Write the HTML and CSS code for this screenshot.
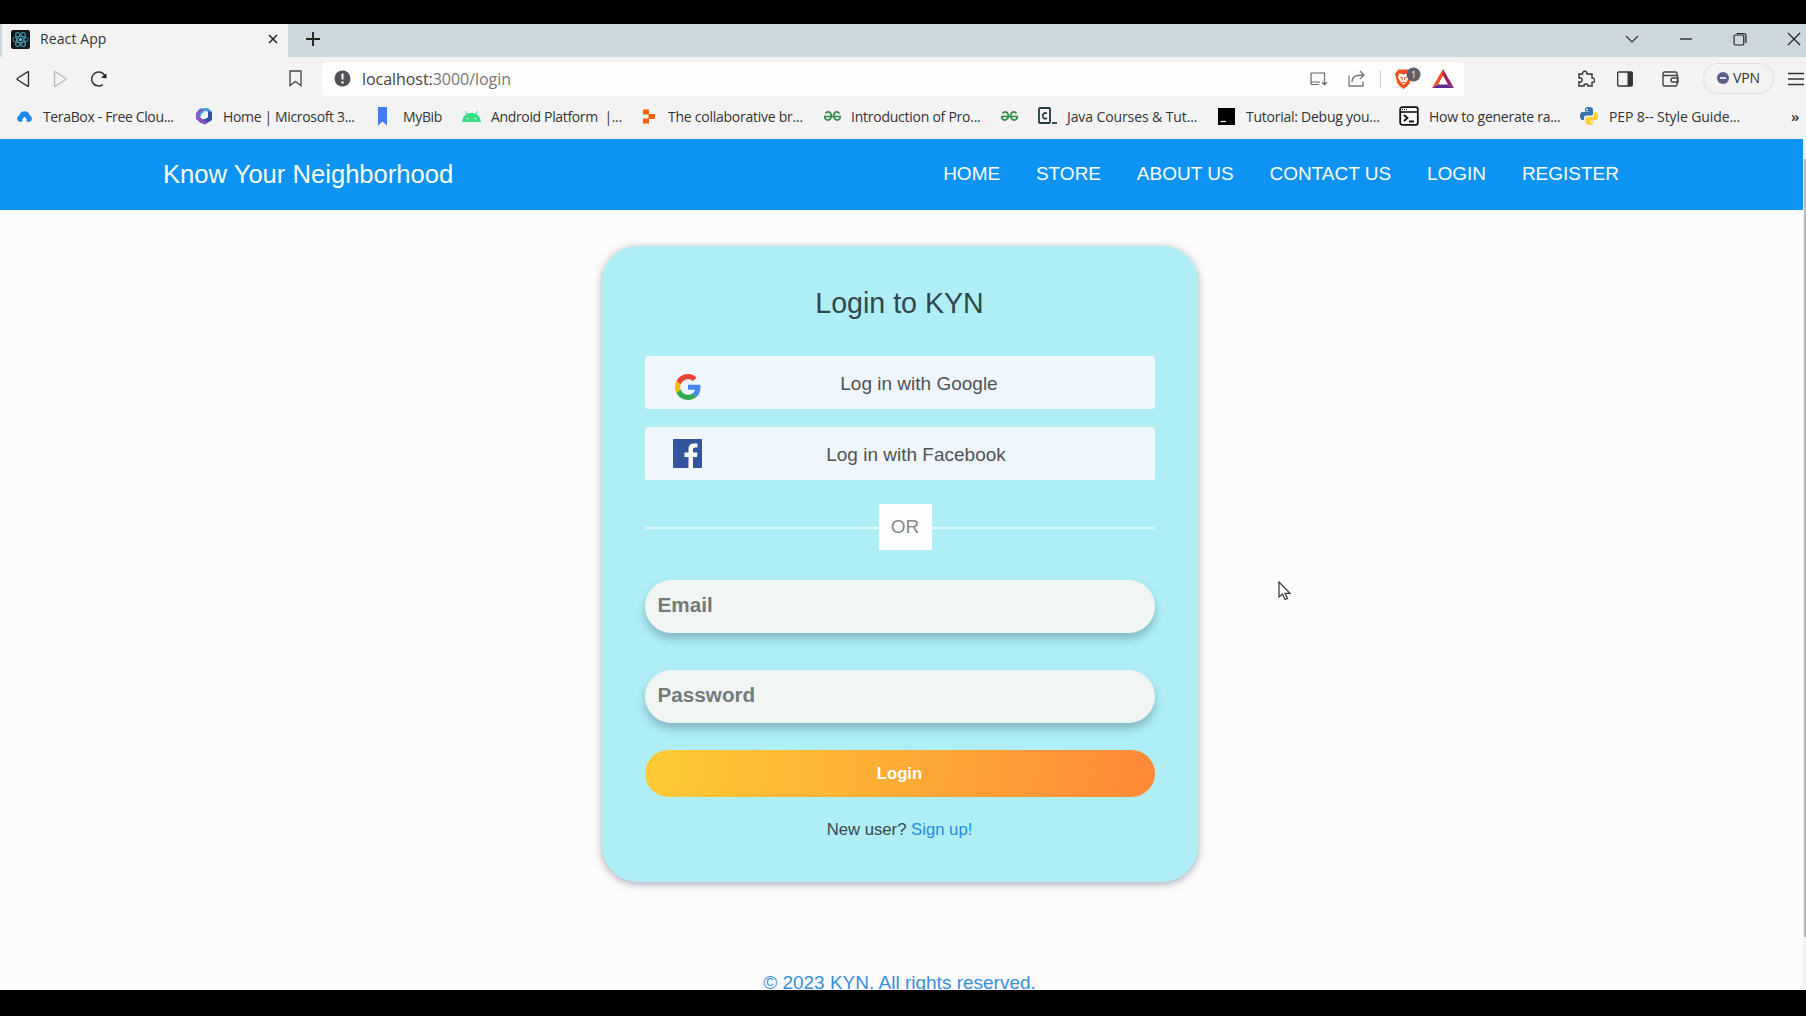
FILE: index.html
```html
<!DOCTYPE html>
<html lang="en">
<head>
<meta charset="utf-8">
<title>React App</title>
<link rel="stylesheet" href="styles.css">
</head>
<body>
<div class="tabstrip">
  <div class="tab">
    <svg class="favicon" width="19" height="19" viewBox="0 0 19 19"><rect width="19" height="19" rx="2" fill="#15191c"/><g fill="none" stroke="#4d9db5" stroke-width="1"><ellipse cx="9.5" cy="9.5" rx="7.8" ry="3"/><ellipse cx="9.5" cy="9.5" rx="7.8" ry="3" transform="rotate(60 9.5 9.5)"/><ellipse cx="9.5" cy="9.5" rx="7.8" ry="3" transform="rotate(120 9.5 9.5)"/></g><circle cx="9.5" cy="9.5" r="1.5" fill="#61dafb"/></svg>
    <span class="tab-title">React App</span>
    <svg class="tab-close" width="10" height="10" viewBox="0 0 10 10"><path d="M1 1l8 8M9 1l-8 8" stroke="#222" stroke-width="1.5"/></svg>
  </div>
  <svg class="new-tab" width="14" height="14" viewBox="0 0 14 14"><path d="M7 0v14M0 7h14" stroke="#222" stroke-width="1.9"/></svg>
  <div class="window-controls">
    <svg width="14" height="14" viewBox="0 0 14 14"><path d="M1 4l6 6 6-6" fill="none" stroke="#333" stroke-width="1.2"/></svg>
    <svg width="14" height="14" viewBox="0 0 14 14"><path d="M1 7h12" stroke="#222" stroke-width="1.3"/></svg>
    <svg width="14" height="14" viewBox="0 0 14 14"><g fill="none" stroke="#222" stroke-width="1.2"><rect x="1" y="3" width="9.8" height="10" rx="1.5"/><path d="M3.5 1.5h7a2.5 2.5 0 0 1 2.5 2.5v7"/></g></svg>
    <svg width="14" height="14" viewBox="0 0 14 14"><path d="M1 1l12 12M13 1L1 13" stroke="#222" stroke-width="1.2"/></svg>
  </div>
</div>

<div class="toolbar">
  <div class="history">
    <svg width="14" height="18" viewBox="0 0 14 18"><path d="M12.5 2.2v13.6q0 1-1 .4L1.6 9.8q-1-.8 0-1.6l9.900-6.400q1-.6 1 .4z" fill="none" stroke="#333" stroke-width="1.4"/></svg>
    <svg width="14" height="18" viewBox="0 0 14 18"><path d="M1.500 2.200v13.600q0 1 1 .4l9.900-6.400q1-.8 0-1.600L2.500 1.800q-1-.6-1 .4z" fill="none" stroke="#bbb" stroke-width="1.400"/></svg>
    <svg width="18" height="18" viewBox="0 0 18 18"><path d="M12.800 14.600A7 7 0 1 1 15 6" fill="none" stroke="#333" stroke-width="1.500"/><path d="M16.500 3.500v5l-5.500-1z" fill="#222"/></svg>
  </div>
  <svg class="save" width="13" height="17" viewBox="0 0 13 17"><path d="M1 1h11v14.500l-5.500-4-5.500 4z" fill="none" stroke="#444" stroke-width="1.300"/></svg>
  <div class="address">
    <svg width="17" height="17" viewBox="0 0 17 17"><circle cx="8.500" cy="8.500" r="8" fill="#505256"/><path d="M8.500 3.500v6" stroke="#fff" stroke-width="2"/><circle cx="8.500" cy="12.500" r="1.200" fill="#fff"/></svg>
    <span class="url"><b>localhost:</b>3000/login</span>
    <div class="address-actions">
      <svg width="18" height="14" viewBox="0 0 18 14"><path d="M8.500 12.500H2a1 1 0 0 1-1-1V2a1 1 0 0 1 1-1h12.500v4.500M1 10h9M14.500 6v6.500M12 10.300l2.500 2.400 2.500-2.400" fill="none" stroke="#666" stroke-width="1.200"/></svg>
      <svg width="18" height="17" viewBox="0 0 18 17"><path d="M1 5.500V16h14v-4.500M4 12c0-5 3-7 11.500-7M12 1l4 4-4 4" fill="none" stroke="#777" stroke-width="1.300"/></svg>
      <i class="separator"></i>
      <svg width="28" height="24" viewBox="0 0 28 24"><path d="M4.500 2.500h10l2.500 3-1 9.500q-.5 3-6.500 7-6-4-6.500-7L1 6.500z" fill="#f4511e"/><path d="M5 6.500l4.500 1 4.500-1 1 4-2 3.500-3.500 4-3.500-4-2-3.500z" fill="#fff"/><path d="M6 10l2.500 1-.5 2.500M13 10l-2.500 1 .5 2.500M8 15.500h3" fill="none" stroke="#f4511e"/><circle cx="19.500" cy="7.500" r="7" fill="#5d6068"/><text x="19.500" y="11" text-anchor="middle" class="badge">1</text></svg>
      <svg class="rewards" width="22" height="19" viewBox="0 0 22 19"><path d="M11 0L0 19l6-3.500 5-9z" fill="#ff4c1b"/><path d="M11 0l11 19-6-3.500-5-9z" fill="#9e1f63"/><path d="M0 19h22l-6-3.500H6z" fill="#5c2c8f"/></svg>
    </div>
  </div>
  <div class="extensions">
    <svg width="18" height="18" viewBox="0 0 18 18"><path d="M2 4h3.500a2.300 2.300 0 1 1 4.500 0h5v4a2.200 2.200 0 1 1 0 4.300V16h-4a2 2 0 1 0-4 0H2v-4a2.200 2.200 0 1 0 0-4z" fill="none" stroke="#333" stroke-width="1.400"/></svg>
    <svg width="16" height="16" viewBox="0 0 16 16"><rect x=".7" y="1" width="14.600" height="14" rx="1" fill="none" stroke="#333" stroke-width="1.300"/><path d="M10.500 1H15v14h-4.500z" fill="#333"/></svg>
    <svg class="wallet" width="17" height="16" viewBox="0 0 17 16"><path d="M15 4.500V2.500q0-1.500-1.500-1.500H2.500Q1 1 1 2.500v11Q1 15 2.500 15h11q1.500 0 1.500-1.500V12M1 4.500h14.500v8M16 7h-5q-2 0-2 2t2 2h5z" fill="none" stroke="#444" stroke-width="1.400"/></svg>
    <span class="vpn"><svg width="12" height="12" viewBox="0 0 12 12"><circle cx="6" cy="6" r="6" fill="#5b5f8d"/><path d="M3 6h6" stroke="#fff" stroke-width="1.600"/></svg>VPN</span>
    <svg width="16" height="14" viewBox="0 0 16 14"><path d="M0 1.500h16M0 7h16M0 12.500h16" stroke="#333" stroke-width="1.300"/></svg>
  </div>
</div>

<div class="bookmarks">
  <span class="bookmark"><svg width="17" height="17" viewBox="0 0 17 17"><path d="M5.500 14H4.300a3.500 3.500 0 0 1-1-6.700 5.400 5.400 0 0 1 10.400 0A3.500 3.500 0 0 1 13 14h-1.500L8.500 9.500z" fill="#1b87f2"/><path d="M6 12l2.500-3.500L11 12H9.500v3h-2v-3z" fill="#fff"/></svg>TeraBox - Free Clou...</span>
  <span class="bookmark"><svg width="18" height="18" viewBox="0 0 18 18"><path d="M5 1.500L13 1l4 4-8-1-4 6z" fill="#3aa0e0"/><path d="M5 1.500L1 6v6l5 4 2-3-3-3V6l4-3z" fill="#7e60c9"/><path d="M17 5v8l-7 4.500-6-3 4-2 5-2V4z" fill="#374ea8"/><path d="M2 12l7 5.500 4-2-7-4z" fill="#8b49c6"/><circle cx="9" cy="9" r="3" fill="#fff"/></svg>Home | Microsoft 3...</span>
  <span class="bookmark mybib"><svg width="14" height="19" viewBox="0 0 14 19"><path d="M2 0h9v18.500l-4.500-4L2 18.500z" fill="#3e7df5"/></svg>MyBib</span>
  <span class="bookmark"><svg width="19" height="13" viewBox="0 0 19 13"><path d="M0 12a9.500 9.200 0 0 1 19 0z" fill="#3ddc84"/><path d="M3.500 1l2 4M15.500 1l-2 4" stroke="#3ddc84"/><circle cx="5.500" cy="8.500" r=".8" fill="#fff"/><circle cx="13.500" cy="8.500" r=".8" fill="#fff"/></svg>Android Platform &nbsp;|...</span>
  <span class="bookmark"><svg width="17" height="15" viewBox="0 0 17 15"><path d="M2 .5h6v5H2zM7.500 5H14v5H7.500zM2 9.500h6v5H2z" fill="#f26207"/></svg>The collaborative br...</span>
  <span class="bookmark"><svg width="17" height="11" viewBox="0 0 17 11"><path d="M0 5.500h17M1.500 2.500Q3.500 0 6 1.500q2.200 2 .8 5.500Q4 11 1 7.500v-2M15.500 2.500Q13.500 0 11 1.500 8.800 3.500 10.200 7q2.800 4 5.800.5v-2" fill="none" stroke="#2f8d46" stroke-width="1.700"/></svg>Introduction of Pro...</span>
  <span class="bookmark"><svg width="17" height="11" viewBox="0 0 17 11"><path d="M0 5.500h17M1.500 2.500Q3.500 0 6 1.500q2.200 2 .8 5.500Q4 11 1 7.500v-2M15.500 2.500Q13.500 0 11 1.500 8.800 3.500 10.200 7q2.800 4 5.800.5v-2" fill="none" stroke="#2f8d46" stroke-width="1.700"/></svg></span>
  <span class="bookmark"><svg width="20" height="18" viewBox="0 0 20 18"><rect x="2" y="1" width="11" height="15" rx="1" fill="none" stroke="#213b45" stroke-width="1.800"/><path d="M9.800 6.700Q8.500 5.500 7 6.200 5.800 7 5.800 9q0 2 1.300 2.500 1.500.5 2.700-.5" fill="none" stroke="#213b45" stroke-width="1.700"/><path d="M15 16h5" stroke="#213b45" stroke-width="1.800"/></svg>Java Courses &amp; Tut...</span>
  <span class="bookmark"><svg width="19" height="17" viewBox="0 0 19 17"><path d="M1 0h17v17H1z" fill="#000"/><path d="M3.500 13.500H9" stroke="#fff" stroke-width="1.200"/></svg>Tutorial: Debug you...</span>
  <span class="bookmark"><svg width="20" height="20" viewBox="0 0 20 20"><rect x="1.200" y="1.200" width="17.600" height="17.600" rx="2" fill="#fff" stroke="#111" stroke-width="1.800"/><path d="M1 6h18" stroke="#111" stroke-width="1.600"/><path d="M3 3.500h6" stroke="#111" stroke-dasharray="1 1"/><path d="M5 9l3.500 3L5 15M10 15.500h5" fill="none" stroke="#111" stroke-width="1.800"/></svg>How to generate ra...</span>
  <span class="bookmark"><svg width="20" height="20" viewBox="0 0 20 20"><path d="M10 1C6 1 6 2.500 6 4v1.500h4.500V6H3.500C1.500 6 1 8 1 10.500S2 14 3.500 14H5v-2c0-2 1-2.500 3-2.500h4c1.500 0 2-1 2-2V4c0-2-1-3-4-3z" fill="#3774a8"/><path d="M10.500 19c4 0 4-1.500 4-3v-1.500H10V14h6.500c2 0 2.500-2 2.500-4s-1-4-2.500-4H15v2.500c0 2-1 2.500-3 2.500H8.500c-1.500 0-2 1-2 2v3c0 2 1 3 4 3z" fill="#ffd13d"/><circle cx="8" cy="3.500" r=".9" fill="#fff"/><circle cx="12.500" cy="16.500" r=".9" fill="#fff"/></svg>PEP 8-- Style Guide...</span>
  <span class="overflow">»</span>
</div>

<div class="viewport">
  <div class="page">
    <header class="navbar">
      <span class="brand">Know Your Neighborhood</span>
      <nav class="links"><a>HOME</a><a>STORE</a><a>ABOUT US</a><a>CONTACT US</a><a>LOGIN</a><a>REGISTER</a></nav>
    </header>
    <main class="card">
      <h1>Login to KYN</h1>
      <div class="social google">
        <svg width="26" height="26" viewBox="0 0 48 48"><path fill="#ea4335" d="M24 9.500c3.540 0 6.710 1.220 9.210 3.600l6.850-6.850C35.900 2.380 30.470 0 24 0 14.620 0 6.510 5.380 2.560 13.220l7.980 6.190C12.430 13.720 17.740 9.500 24 9.500z"/><path fill="#4285f4" d="M46.980 24.550c0-1.570-.15-3.090-.38-4.550H24v9.020h12.940c-.58 2.960-2.260 5.480-4.780 7.180l7.730 6c4.510-4.180 7.090-10.360 7.090-17.650z"/><path fill="#fbbc05" d="M10.530 28.590c-.48-1.450-.76-2.990-.76-4.590s.27-3.140.76-4.590l-7.980-6.190C.92 16.460 0 20.120 0 24c0 3.880.92 7.540 2.560 10.780l7.970-6.190z"/><path fill="#34a853" d="M24 48c6.480 0 11.930-2.130 15.890-5.810l-7.730-6c-2.150 1.450-4.920 2.300-8.160 2.300-6.260 0-11.570-4.220-13.470-9.910l-7.980 6.190C6.510 42.620 14.620 48 24 48z"/></svg>
        <span>Log in with Google</span>
      </div>
      <div class="social facebook">
        <svg width="29" height="29" viewBox="0 0 29 29"><rect width="29" height="29" rx="1" fill="#34549b"/><path d="M15.500 29V18h-4v-4.500h4V10c0-3.700 2.300-5.500 5.500-5.500h3.500v4h-2.200c-1.900 0-2.300.9-2.300 2.200v2.800h4.500L24 18h-4v11z" fill="#fff"/></svg>
        <span>Log in with Facebook</span>
      </div>
      <div class="divider"><span>OR</span></div>
      <div class="field email">Email</div>
      <div class="field password">Password</div>
      <div class="submit">Login</div>
      <p class="signup">New user? <a>Sign up!</a></p>
    </main>
    <footer>© 2023 KYN. All rights reserved.</footer>
  </div>
  <div class="scrollbar"><i></i></div>
</div>
<svg class="cursor" width="13" height="20" viewBox="0 0 13 20"><path d="M1 1v15l3.500-3 2.500 5.500 2.500-1L7 12.300h5z" fill="#fff" stroke="#333" stroke-width="1.200"/></svg>
</body>
</html>
```
FILE: styles.css
```css
* { box-sizing: border-box; }
body {
  margin: 0;
  width: 1806px;
  height: 1016px;
  padding: 24px 0 26px;
  display: flex;
  flex-direction: column;
  overflow: hidden;
  background: #000;
  font-family: "Liberation Sans", Arial, sans-serif;
}
svg { flex: none; display: block; }

/* Browser chrome */
.tabstrip, .toolbar, .bookmarks { font-family: "Open Sans", "Noto Sans", sans-serif; color: #333; }
.tabstrip { height: 33px; flex: none; display: flex; align-items: center; background: #cdd7de; padding-left: 2px; }
.tab { width: 286px; height: 33px; display: flex; align-items: center; padding: 0 10px 3px 9px; background: #f4f3f4; }
.tab-title { margin: -2px 0 0 10px; font-size: 14px; letter-spacing: .1px; }
.tab-close { margin-left: auto; }
.new-tab { margin: 0 0 3px 18px; }
.window-controls { margin: 0 5px 3px auto; display: flex; gap: 40px; }
.toolbar { height: 43px; flex: none; display: flex; align-items: center; background: #f4f3f4; padding-left: 16px; }
.history { display: flex; gap: 23px; align-items: center; }
.save { margin: 0 20px 0 181px; }
.address { width: 1142px; height: 34px; border-radius: 4px; background: #fdfdfd; display: flex; align-items: center; padding: 0 10px 0 12px; }
.url { margin-left: 11px; font-size: 16px; letter-spacing: -.05px; color: #777; }
.url b { font-weight: 400; color: #444; }
.address-actions { margin-left: auto; display: flex; align-items: center; gap: 20px; }
.separator { width: 1px; height: 18px; background: #ccc; margin: 0 -7px 0 -6px; }
.rewards { margin-left: -10px; }
.badge { font: 9px "Open Sans", sans-serif; fill: #fff; }
.extensions { margin-left: auto; display: flex; align-items: center; gap: 22px; }
.wallet { margin-left: 7px; }
.vpn { width: 71px; height: 31px; margin: 0 -8px 0 2px; border: 1px dotted #c8c8cf; border-radius: 16px; display: flex; align-items: center; justify-content: center; gap: 4px; font-size: 14px; letter-spacing: -.1px; padding-bottom: 2px; }
.extensions > svg:last-child { margin-right: 2px; }
.bookmarks { height: 39px; flex: none; display: grid; grid-template-columns: 179px 181px 86px 179px 183px 177px 36px 180px 182px 180px 206px auto; align-items: center; padding: 0 0 7px 16px; background: #f4f3f4; font-size: 14px; }
.bookmark { display: flex; align-items: center; white-space: nowrap; gap: 10px; letter-spacing: -.25px; }
.bookmark:nth-child(-n+4) { letter-spacing: -.35px; }
.bookmark:nth-child(8), .bookmark:nth-child(11) { letter-spacing: -.1px; }
.mybib { gap: 13px; }
.overflow { font-weight: 600; font-size: 15px; padding-left: 6px; }

/* Application */
.viewport { flex: 1; min-height: 0; display: flex; overflow: hidden; background: #fcfcfc; }
.page { width: 1803px; flex: none; display: flex; flex-direction: column; align-items: center; }
.scrollbar { width: 3px; background: #f2f2f2; padding-top: 20px; }
.scrollbar i { display: block; height: 778px; margin-left: 1px; background: #b9b9b9; }
.navbar { width: 100%; height: 71px; flex: none; background: #0d93f3; color: #fff; display: flex; align-items: center; justify-content: space-between; padding: 0 184px 1px 163px; }
.brand { font-size: 25.600px; }
.links { display: flex; gap: 35.800px; font-size: 19px; }
.card { width: 596px; height: 636px; flex: none; margin: 36px 4px 0 0; padding: 40px 43px 0; border-radius: 36px; background: #b0eef6; box-shadow: 0 2px 9px rgba(40, 40, 80, .4); }
h1 { margin: 0 0 36px; font-size: 28.600px; line-height: 34px; font-weight: 400; text-align: center; color: #30474d; }
.social { height: 53px; display: flex; align-items: center; border-radius: 3px; background: #f0f6fd; color: #505256; font-size: 19px; }
.social span { flex: 1; text-align: center; padding-top: 2px; }
.google { padding: 0 29px 0 30px; }
.google svg { margin-top: 8px; }
.google span { padding-left: 12px; }
.facebook { margin-top: 18px; padding: 0 27px 0 28px; }
.facebook span { padding-left: 3px; }
.divider { margin-top: 23px; height: 47px; display: flex; align-items: center; }
.divider::before, .divider::after { content: ""; height: 2px; margin-top: 2px; background: #dcf7fa; flex: 1; }
.divider::before { flex: none; width: 234px; }
.divider span { width: 53px; height: 46px; background: #fdfdfd; color: #888; font-size: 19px; line-height: 46px; text-align: center; }
.field { height: 53px; border-radius: 27px; padding: 0 13px 4px; background: #f1f5f4; color: #747b7b; font-size: 20.700px; font-weight: 700; line-height: 49px; box-shadow: 0 6px 8px rgba(60, 110, 130, .4); }
.email { margin-top: 30px; }
.password { margin-top: 37px; }
.submit { margin-top: 27px; height: 47px; border-radius: 24px; background: linear-gradient(100deg, #fdcb35, #fdab35 50%, #ff8838); color: #fff; font-size: 16.700px; font-weight: 700; line-height: 47px; text-align: center; }
.signup { margin: 23px 0 0; font-size: 16.700px; line-height: 20px; text-align: center; color: #36484e; }
.signup a { color: #258be0; }
footer { margin: 89px 4px 0 0; font-size: 19px; line-height: 24px; flex: none; color: #378fdf; }
.cursor { position: absolute; left: 1278px; top: 581px; }
```
